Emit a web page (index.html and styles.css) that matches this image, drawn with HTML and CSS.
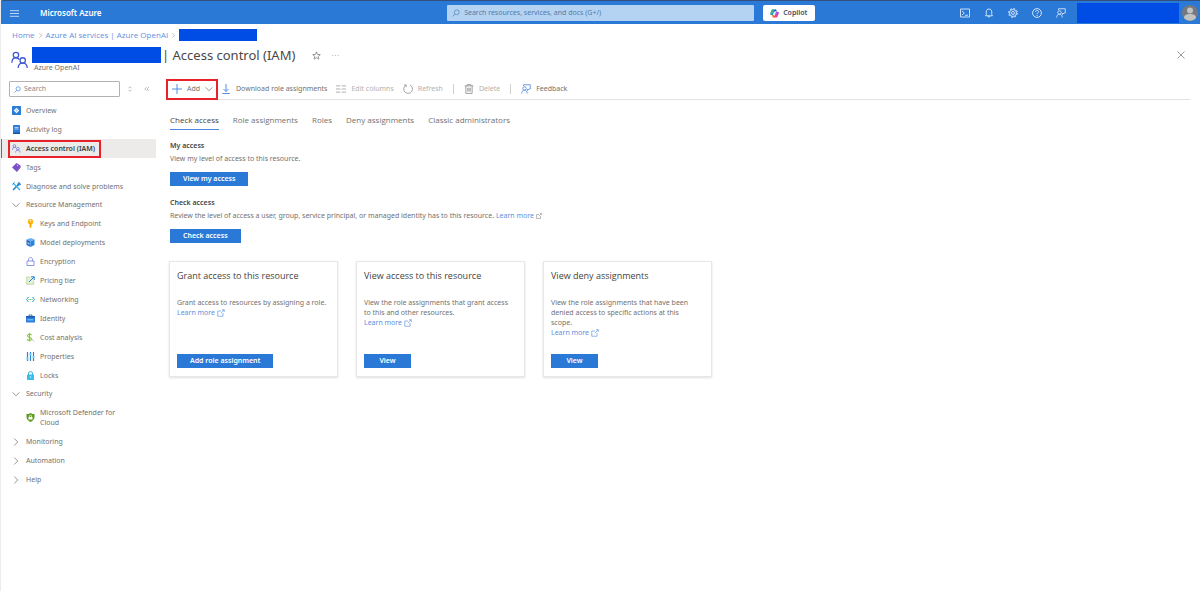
FILE: index.html
```html
<!DOCTYPE html>
<html lang="en">
<head>
<meta charset="utf-8">
<title>Access control (IAM) - Microsoft Azure</title>
<link rel="stylesheet" href="styles.css">
</head>
<body>
<svg class="sprite" aria-hidden="true">
  <symbol id="people" viewBox="0 0 20 20"><g fill="none" stroke="currentColor" stroke-width="1.4"><circle cx="5.5" cy="4.500" r="3"/><path d="M1 13c0-3.500 1.800-5.500 4.500-5.500 1.800 0 3 .8 3.800 2"/><circle cx="13" cy="10.500" r="3"/><path d="M8 19c0-3.500 2-5.500 5-5.500s5 2 5 5.500"/></g></symbol>
  <symbol id="search" viewBox="0 0 16 16"><g fill="none" stroke="currentColor" stroke-width="1.400"><circle cx="9.500" cy="6.500" r="4.800"/><path d="M6 10l-5 5"/></g></symbol>
  <symbol id="down" viewBox="0 0 16 16"><path d="M1 4.500l7 7 7-7" fill="none" stroke="currentColor" stroke-width="1.500"/></symbol>
  <symbol id="right" viewBox="0 0 16 16"><path d="M4.500 1l7 7-7 7" fill="none" stroke="currentColor" stroke-width="1.500"/></symbol>
  <symbol id="feedback" viewBox="0 0 20 20"><g fill="none" stroke="currentColor" stroke-width="1.600"><circle cx="7" cy="9" r="3.500"/><path d="M1.500 19c0-4 2-6.500 5.500-6.500s5.500 2.500 5.500 6.500M5 4V1.500h13.500v8.500h-2.500l-3 3v-3"/></g></symbol>
  <symbol id="external" viewBox="0 0 16 16"><path d="M8 4H1.500v10.500H12V8M10 1.500h4.500V6M14.500 1.500L7.500 8.500" fill="none" stroke="currentColor" stroke-width="1.300"/></symbol>
</svg>

<header class="topbar">
  <button class="icon-button menu-button" aria-label="Menu"><svg class="icon" viewBox="0 0 16 16"><path d="M0 3h16M0 8h16M0 13h16" stroke="currentColor" stroke-width="1.400"/></svg></button>
  <a class="brand" href="#">Microsoft Azure</a>
  <div class="global-search">
    <svg class="icon"><use href="#search"/></svg>
    <input type="search" aria-label="Search resources" placeholder="Search resources, services, and docs (G+/)">
  </div>
  <button class="copilot">
    <svg class="copilot-icon" viewBox="0 0 20 20"><path d="M6 1h7l-3 6-3 7H4c-3 0-4-2-3-5l2-5c.6-2 1.500-3 3-3z" fill="#2b8fd8"/><path d="M3 4c.6-2 1.500-3 3-3h3L5 11l-3 2c-2-1-1-3-.5-5z" fill="#41b883"/><path d="M12 1c2 0 2.600 1.500 3 4h-4L9 3c.5-1.400 1.500-2 3-2z" fill="#2350c4"/><path d="M14 19H8l3-6 2-7h3c3 0 4 2 3 5l-2 5c-.6 2-1.500 3-3 3z" fill="#e0479f"/><path d="M8 19c-2 0-3-1.500-3.500-5H9l3 3c-.6 1.400-2 2-4 2z" fill="#f2702c"/><path d="M15 6c3 0 5 1 4.500 3L16 12l-3-1 1-5z" fill="#a259e0"/><path d="M8.500 7h3.500l-1.500 6H7z" fill="#fff"/></svg>
    Copilot
  </button>
  <nav class="top-actions" aria-label="Portal tools">
    <button class="icon-button" aria-label="Cloud Shell"><svg class="icon" viewBox="0 0 20 20"><path d="M1 2h18v16H1zM4 6l4.500 4L4 14M10 14.500h6" fill="none" stroke="currentColor" stroke-width="1.700"/></svg></button>
    <button class="icon-button" aria-label="Notifications"><svg class="icon" viewBox="0 0 20 20"><path d="M3 15.500h14l-1.500-2V8c0-3.500-2-6-5.500-6S4.500 4.500 4.500 8v5.500zM8 16c0 3 4 3 4 0" fill="none" stroke="currentColor" stroke-width="1.700"/></svg></button>
    <button class="icon-button" aria-label="Settings"><svg class="icon" viewBox="0 0 20 20"><g fill="none" stroke="currentColor"><circle cx="10" cy="10" r="7" stroke-width="1.700"/><circle cx="10" cy="10" r="3" stroke-width="1.700"/><circle cx="10" cy="10" r="8.800" stroke-width="2" stroke-dasharray="3.400 3.510"/></g></svg></button>
    <button class="icon-button" aria-label="Help"><svg class="icon" viewBox="0 0 20 20"><g fill="none" stroke="currentColor" stroke-width="1.800"><circle cx="10" cy="10" r="8.800"/><path d="M7 8c0-4 6-4 6-.5 0 2-3 2.500-3 5M10 14v2"/></g></svg></button>
    <button class="icon-button" aria-label="Feedback"><svg class="icon"><use href="#feedback"/></svg></button>
  </nav>
  <div class="account">
    <span class="account-mask"></span>
    <svg class="avatar" viewBox="0 0 32 32"><circle cx="16" cy="16" r="16" fill="#75797f"/><circle cx="16" cy="11" r="6" fill="#c1c2c4"/><path d="M4 26c0-6 5-8 12-8s12 2 12 8c-6 7-18 7-24 0z" fill="#c1c2c4"/></svg>
  </div>
</header>

<nav class="breadcrumb" aria-label="Breadcrumb">
  <a href="#">Home</a>
  <svg class="crumb-arrow"><use href="#right"/></svg>
  <a href="#">Azure AI services | Azure OpenAI</a>
  <svg class="crumb-arrow"><use href="#right"/></svg>
  <span class="crumb-mask"></span>
</nav>

<div class="title-row">
  <svg class="title-icon"><use href="#people"/></svg>
  <div class="title-block">
    <div class="title-line">
      <span class="title-mask"></span>
      <h1>| Access control (IAM)</h1>
      <button class="icon-button" aria-label="Favorite"><svg class="icon" viewBox="0 0 20 20"><path d="M10 2l2.300 5.700 6.200.4-4.800 4 1.600 6L10 14.800 4.700 18.100l1.600-6-4.800-4 6.200-.4z" fill="none" stroke="currentColor" stroke-width="1.600"/></svg></button>
      <button class="icon-button more" aria-label="More"><svg class="icon" viewBox="0 0 16 16"><path d="M2 8h2M7 8h2M12 8h2" stroke="currentColor" stroke-width="1.300"/></svg></button>
    </div>
    <p class="subtitle">Azure OpenAI</p>
  </div>
  <button class="icon-button close" aria-label="Close"><svg class="icon" viewBox="0 0 16 16"><path d="M1 1l14 14M15 1L1 15" stroke="currentColor" stroke-width="1.400"/></svg></button>
</div>

<div class="body">
  <aside class="sidebar">
    <div class="side-search">
      <div class="side-field"><svg class="icon"><use href="#search"/></svg><input type="search" aria-label="Search menu" placeholder="Search"></div>
      <button class="icon-button" aria-label="Expand all"><svg class="tiny" viewBox="0 0 16 16"><path d="M4 6l4-4 4 4M4 10l4 4 4-4" fill="none" stroke="currentColor" stroke-width="1.500"/></svg></button>
      <button class="icon-button" aria-label="Collapse menu"><svg class="tiny" viewBox="0 0 16 16"><path d="M7 3L2 8l5 5M13 3L8 8l5 5" fill="none" stroke="currentColor" stroke-width="1.500"/></svg></button>
    </div>
    <nav class="side-nav" aria-label="Resource menu">
      <a class="item" href="#"><svg class="icon" viewBox="0 0 18 18"><rect width="18" height="18" rx="1" fill="#2e7ddb"/><path d="M9 3.500l5.500 5.500L9 14.500 3.500 9z" fill="#fff"/><path d="M9 6v6M6 9h6" stroke="#8fbdf0"/></svg>Overview</a>
      <a class="item" href="#"><svg class="icon" viewBox="0 0 18 18"><rect x="2" width="14" height="18" rx="1" fill="#2e7ddb"/><path d="M2 15h14v3H2z" fill="#1858ad"/><path d="M5 5h8M5 8h8" stroke="#d8ebff" stroke-width="1.500"/></svg>Activity log</a>
      <a class="item selected" href="#" aria-current="page"><svg class="icon indigo"><use href="#people"/></svg>Access control (IAM)</a>
      <a class="item" href="#"><svg class="icon" viewBox="0 0 18 18"><path d="M9 0l8 5-7 12L0 9z" fill="#7b4fc9"/><path d="M0 9l10 8 7-12v4l-7 9z" fill="#4e2c97"/><circle cx="11" cy="4.500" r="1.200" fill="#fff"/></svg>Tags</a>
      <a class="item" href="#"><svg class="icon" viewBox="0 0 18 18"><path d="M2 16L16 2" stroke="#1b82d1" stroke-width="3"/><path d="M2 2l14 14" stroke="#35b4e9" stroke-width="2.500"/><path d="M11 5l3-5M13 7l5-3M1 5l4-4" stroke="#1b82d1" stroke-width="2"/></svg>Diagnose and solve problems</a>
      <button class="item group" aria-expanded="true"><svg class="chevron"><use href="#down"/></svg>Resource Management</button>
      <a class="item sub" href="#"><svg class="icon" viewBox="0 0 18 18"><circle cx="9" cy="5.500" r="5.500" fill="#fdb713"/><path d="M7 8h4v8l-2 2-2-2z" fill="#f5a700"/><circle cx="9" cy="3.500" r="1.300" fill="#fff"/></svg>Keys and Endpoint</a>
      <a class="item sub" href="#"><svg class="icon" viewBox="0 0 18 18"><path d="M9 0l8 3-8 4-8-4z" fill="#68b3f4"/><path d="M1 3l8 4v11l-8-4z" fill="#1f66c7"/><path d="M17 3L9 7v11l8-4z" fill="#2c83df"/><path d="M3 8l4 2v4l-4-2z" fill="#8dc5f7"/></svg>Model deployments</a>
      <a class="item sub" href="#"><svg class="icon" viewBox="0 0 18 18"><path d="M2 8h14v9H2zM5 8V5c0-5.500 8-5.500 8 0v3" fill="none" stroke="#6577df" stroke-width="1.500"/></svg>Encryption</a>
      <a class="item sub" href="#"><svg class="icon" viewBox="0 0 18 18"><path d="M1 2h15v15H1z" fill="#e6efd9"/><path d="M1 2h7M1.500 2v14.500h14V10" fill="none" stroke="#b6d38c" stroke-width="1.500"/><path d="M6 12L16 2M10 1.500h6.500V8" fill="none" stroke="#2e83d8" stroke-width="2"/></svg>Pricing tier</a>
      <a class="item sub" href="#"><svg class="icon" viewBox="0 0 18 18"><path d="M5 4L1 9l4 5M13 4l4 5-4 5" fill="none" stroke="#2aa5d8" stroke-width="2"/><path d="M5 9h2M8 9h2M11 9h2" stroke="#71bf44" stroke-width="2"/></svg>Networking</a>
      <a class="item sub" href="#"><svg class="icon" viewBox="0 0 18 18"><path d="M6 4V2h6v2" fill="none" stroke="#174f9c" stroke-width="1.500"/><rect y="4" width="18" height="13" rx="1" fill="#2e7ddb"/><path d="M0 4h18v3H0z" fill="#1c5baf"/><path d="M3 10h12v3H3z" fill="#62b7ef"/></svg>Identity</a>
      <a class="item sub" href="#"><svg class="icon" viewBox="0 0 18 18"><path d="M11 4C8 1 3 2.500 3 5.500c0 4 8 2.500 8 6.500 0 3.500-6 4-9 1M7 0v17" fill="none" stroke="#86c93a" stroke-width="2.200"/><path d="M11 11l5 6" stroke="#9ba8b2" stroke-width="1.400"/></svg>Cost analysis</a>
      <a class="item sub" href="#"><svg class="icon" viewBox="0 0 18 18"><path d="M3 0v18M9 0v18M15 0v18" stroke="#377fd3" stroke-width="2.400"/><path d="M3 11v4M9 3v4M15 8v4" stroke="#6dd5f4" stroke-width="4"/></svg>Properties</a>
      <a class="item sub" href="#"><svg class="icon" viewBox="0 0 18 18"><path d="M5 9V5c0-5 8-5 8 0v4" fill="none" stroke="#249fcf" stroke-width="2"/><rect x="2" y="7" width="14" height="11" rx="1" fill="#38bee8"/><circle cx="9" cy="12" r="1.500" fill="#d9f6ff"/></svg>Locks</a>
      <button class="item group" aria-expanded="true"><svg class="chevron"><use href="#down"/></svg>Security</button>
      <a class="item sub tall" href="#"><svg class="icon" viewBox="0 0 18 18"><path d="M9 0c3 2 5 2 8 2v6c0 5-4 8-8 10-4-2-8-5-8-10V2c3 0 5 0 8-2z" fill="#5f9d20"/><path d="M5 8h8v5H5z" fill="#fff"/><path d="M7 8V6c0-2 4-2 4 0v2" fill="none" stroke="#fff" stroke-width="1.400"/></svg><span>Microsoft Defender for Cloud</span></a>
      <button class="item" aria-expanded="false"><svg class="chevron"><use href="#right"/></svg>Monitoring</button>
      <button class="item" aria-expanded="false"><svg class="chevron"><use href="#right"/></svg>Automation</button>
      <button class="item" aria-expanded="false"><svg class="chevron"><use href="#right"/></svg>Help</button>
    </nav>
  </aside>

  <main class="main">
    <div class="toolbar" role="toolbar" aria-label="Commands">
      <button class="command add"><svg class="icon blue" viewBox="0 0 16 16"><path d="M8 0v16M0 8h16" stroke="currentColor" stroke-width="1.500"/></svg>Add<svg class="chevron"><use href="#down"/></svg></button>
      <button class="command"><svg class="icon blue" viewBox="0 0 16 16"><path d="M8 0v12M4 8l4 4 4-4M2 15.200h12" fill="none" stroke="currentColor" stroke-width="1.500"/></svg>Download role assignments</button>
      <button class="command" disabled><svg class="icon" viewBox="0 0 16 16"><path d="M0 3h7M9 3h7M0 8h7M9 8h7M0 13h7M9 13h7" stroke="currentColor" stroke-width="1.600"/></svg>Edit columns</button>
      <button class="command" disabled><svg class="icon" viewBox="0 0 16 16"><path d="M4.500 2A7 7 0 1 0 11 1.600M1.500 1.500h3.500V5" fill="none" stroke="#858585" stroke-width="1.200"/></svg>Refresh</button>
      <span class="divider"></span>
      <button class="command" disabled><svg class="icon" viewBox="0 0 16 16"><path d="M1 3h14M5 3V1h6v2M3 3v12h10V3M6 6v6M8 6v6M10 6v6" fill="none" stroke="#999" stroke-width="1.500"/></svg>Delete</button>
      <span class="divider"></span>
      <button class="command"><svg class="icon blue"><use href="#feedback"/></svg>Feedback</button>
    </div>

    <div class="tabs" role="tablist">
      <button class="tab active" role="tab" aria-selected="true">Check access</button>
      <button class="tab" role="tab">Role assignments</button>
      <button class="tab" role="tab">Roles</button>
      <button class="tab" role="tab">Deny assignments</button>
      <button class="tab" role="tab">Classic administrators</button>
    </div>

    <section class="section">
      <h2>My access</h2>
      <p>View my level of access to this resource.</p>
      <button class="primary">View my access</button>
    </section>
    <section class="section">
      <h2>Check access</h2>
      <p>Review the level of access a user, group, service principal, or managed identity has to this resource. <a href="#">Learn more <svg class="link-icon small"><use href="#external"/></svg></a></p>
      <button class="primary">Check access</button>
    </section>

    <div class="cards">
      <article class="card">
        <h3>Grant access to this resource</h3>
        <p>Grant access to resources by assigning a role.<br><a href="#">Learn more <svg class="link-icon"><use href="#external"/></svg></a></p>
        <button class="primary">Add role assignment</button>
      </article>
      <article class="card">
        <h3>View access to this resource</h3>
        <p>View the role assignments that grant access to this and other resources.<br><a href="#">Learn more <svg class="link-icon"><use href="#external"/></svg></a></p>
        <button class="primary">View</button>
      </article>
      <article class="card">
        <h3>View deny assignments</h3>
        <p>View the role assignments that have been denied access to specific actions at this scope.<br><a href="#">Learn more <svg class="link-icon"><use href="#external"/></svg></a></p>
        <button class="primary">View</button>
      </article>
    </div>
  </main>
</div>
</body>
</html>
```

FILE: styles.css
```css
:root {
  --blue: #2b79d7;
  --mask: #004de6;
  --link: #5f8fe0;
  --text: #73716f;
  --dark: #454341;
  --red: #e8222a;
  --ui: "Noto Sans", "Open Sans", sans-serif;
  --heading: "Open Sans", "Noto Sans", sans-serif;
}

* { box-sizing: border-box; }

body {
  margin: 0;
  min-height: 100vh;
  border-left: 1px solid #ececec;
  background: #fff;
  color: var(--text);
  font: 7px/10px var(--ui);
}

h1, h2, h3, p { margin: 0; font-weight: 400; }
a { color: var(--link); text-decoration: none; }
button, input { font: inherit; color: inherit; border: 0; padding: 0; background: none; }
input { flex: 1; min-width: 0; outline: 0; }
svg { flex: none; }

.sprite { position: absolute; width: 0; height: 0; }
.icon { display: block; width: 9px; height: 9px; }
.icon-button { display: flex; align-items: center; justify-content: center; }
.chevron { width: 8px; height: 8px; }
.tiny { display: block; width: 6px; height: 6px; }
.blue { color: #4a86e0; }
.indigo { color: #5560d0; }

.topbar {
  display: flex;
  align-items: center;
  height: 24px;
  margin-left: -1px;
  padding-top: 1px;
  border-top: 1px solid #33507c;
  border-top-left-radius: 3px;
  background: var(--blue);
  color: #e6f0fc;
}
.menu-button { width: 28px; }
.brand { flex: 13 1 0; padding-left: 12px; color: #fff; font-size: 8px; font-weight: 600; }
.global-search {
  display: flex;
  align-items: center;
  gap: 4px;
  width: 307px;
  height: 16px;
  padding: 0 5px;
  border-radius: 1px;
  background: #b4d3f2;
  color: #4f7fb8;
}
.global-search .icon { width: 8px; height: 8px; }
.global-search input::placeholder { color: #537ba9; opacity: 1; }
.copilot {
  display: flex;
  align-items: center;
  gap: 4px;
  height: 16px;
  margin-left: 9px;
  padding: 0 8px 0 7px;
  border-radius: 2px;
  background: #fff;
  color: #454a66;
  font-weight: 600;
}
.copilot-icon { width: 9px; height: 9px; }
.top-actions { flex: 8 1 0; display: flex; justify-content: flex-end; gap: 14px; padding-right: 11px; }
.top-actions .icon { width: 10px; height: 10px; }
.account { display: flex; align-items: center; gap: 3px; padding-right: 2px; }
.account-mask { width: 102px; height: 20px; background: var(--mask); }
.avatar { width: 16px; height: 16px; }

.breadcrumb {
  display: flex;
  align-items: center;
  gap: 3px;
  height: 23px;
  padding: 0 0 1px 11px;
  font-family: var(--heading);
  font-size: 8px;
}
.crumb-arrow { width: 5px; height: 5px; }
.crumb-mask { width: 78px; height: 12px; background: var(--mask); }

.title-row { display: flex; height: 27px; padding: 0 15px 0 10px; }
.title-icon { width: 18px; height: 18px; margin-top: 4px; color: #3f58d4; }
.title-block { flex: 1; padding-left: 3px; }
.title-line { display: flex; align-items: center; height: 16px; }
.title-mask { width: 129px; height: 16px; background: var(--mask); }
h1 { padding: 0 17px 0 1px; color: #4a4846; font-size: 13px; line-height: 16px; }
.more { margin-left: 10px; color: #a8a6a4; }
.subtitle { padding-left: 2px; }
.close { align-self: flex-start; height: 16px; }
.close .icon { width: 8px; height: 8px; }

.body { display: grid; grid-template-columns: 165px minmax(0, 1fr); padding-top: 5px; }

.side-search { display: flex; align-items: center; gap: 7px; height: 20px; padding-left: 8px; color: #8a8886; }
.side-search .icon-button:last-child { padding-left: 4px; }
.side-field {
  display: flex;
  align-items: center;
  gap: 3px;
  width: 111px;
  height: 16px;
  padding: 0 4px;
  border: 1px solid #b5b3b1;
  border-radius: 1px;
}
.side-field .icon { width: 7px; height: 7px; color: var(--blue); }
.side-field input::placeholder { color: #8a8886; opacity: 1; }
.side-nav { width: 155px; padding-top: 2px; }
.item {
  display: flex;
  align-items: center;
  gap: 5px;
  width: 100%;
  height: 19px;
  padding-left: 11px;
  color: var(--text);
  text-align: left;
}
.item .chevron { margin-right: 1px; }
.group { height: 18px; }
.sub { padding-left: 25px; }
.tall { height: 29px; padding-right: 30px; }
.selected {
  position: relative;
  background: #edebe9;
  color: #403e3c;
  font-weight: 600;
}
.selected::before { content: ""; position: absolute; left: -1px; width: 2px; height: 19px; background: var(--blue); }
.selected::after { content: ""; position: absolute; inset: 1px 55px 0 7px; border: 2px solid var(--red); }

.main { padding-right: 10px; }
.toolbar {
  display: flex;
  align-items: center;
  gap: 9px;
  height: 21px;
  border-bottom: 1px solid #e3e2e1;
}
.command { display: flex; align-items: center; gap: 5px; height: 21px; }
.command .icon { width: 10px; height: 10px; }
.command:disabled { color: #b3b1af; }
.add { width: 52px; padding: 0 4px; justify-content: space-between; border: 2px solid var(--red); }
.add + .command { margin-left: -6px; }
.divider { width: 1px; height: 10px; margin: 0 1px; background: #d2d0ce; }

.tabs { display: flex; gap: 14px; margin: 11px 0 0 4px; font-family: var(--heading); }
.tab { height: 19px; border-bottom: 1px solid transparent; font-size: 8px; }
.active { border-color: #4a86e0; color: var(--dark); font-weight: 500; }

.section { padding: 11px 0 1px 4px; }
.section h2 { color: var(--dark); font-size: 7px; font-weight: 600; }
.section p { margin: 3px 0 8px; }
.primary { min-width: 47px; height: 14px; padding: 0 13px; background: var(--blue); color: #fff; font-weight: 600; }
.link-icon { width: 8px; height: 8px; vertical-align: -2px; }
.small { width: 6px; height: 6px; vertical-align: -1px; color: var(--text); }

.cards { display: flex; gap: 18px; padding: 17px 0 0 3px; }
.card {
  display: flex;
  flex-direction: column;
  align-items: flex-start;
  flex: 0 1 169px;
  min-height: 116px;
  padding: 9px 7px 8px;
  border: 1px solid #e8e7e6;
  box-shadow: 0 1px 2px rgb(0 0 0 / 12%);
}
.card h3 { color: var(--dark); font-family: var(--heading); font-size: 9px; }
.card p { margin: 17px 0 auto; padding-right: 3px; }
```
